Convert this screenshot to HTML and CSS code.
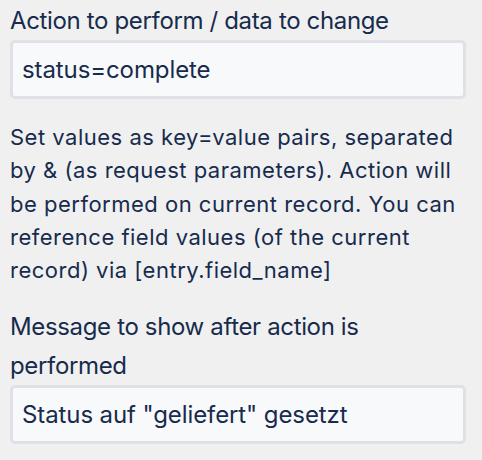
FILE: index.html
```html
<!DOCTYPE html>
<html>
<head>
<meta charset="utf-8">
<link rel="stylesheet" href="styles.css">
</head>
<body>
<div class="form">
  <div class="field">
    <label class="label">Action to perform / data to change</label>
    <div class="input">status=complete</div>
    <p class="help">Set values as key=value pairs, separated by &amp; (as request parameters). Action will be performed on current record. You can reference field values (of the current record) via [entry.field_name]</p>
  </div>
  <div class="field">
    <label class="label">Message to show after action is performed</label>
    <div class="input">Status auf "geliefert" gesetzt</div>
  </div>
</div>
</body>
</html>
```
FILE: styles.css
```css
html, body {
  margin: 0;
  background: #f0f0f0;
}
body {
  font-family: Inter, "Liberation Sans", Arial, sans-serif;
  color: #172b4d;
}
.form {
  width: 456px;
  padding: 1px 10px 0 10px;
  display: flex;
  flex-direction: column;
}
.field {
  display: flex;
  flex-direction: column;
}
.label {
  display: block;
  font-size: 24px;
  line-height: 39px;
  letter-spacing: -0.35px;
}
.input {
  box-sizing: border-box;
  height: 59px;
  border: 3px solid #dfe1e6;
  border-radius: 5px;
  background: #f8f9fb;
  padding: 0 9px;
  font-size: 24px;
  letter-spacing: -0.1px;
  display: flex;
  align-items: center;
}
.help {
  margin: 22px 0 20px 0;
  font-size: 22px;
  line-height: 33.3px;
  letter-spacing: 0.5px;
}
```
